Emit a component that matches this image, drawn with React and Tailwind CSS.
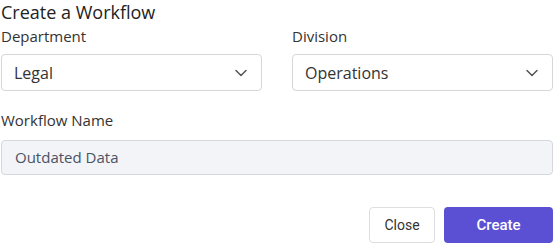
import React from 'react';
import { ChevronDown } from 'lucide-react';

const Select = ({ value }) => (
  <div className="h-[37px] flex items-center justify-between pl-[12px] pr-[10px] border border-[#d6d6d6] rounded-[4px] bg-white">
    <span className="text-[16px] text-[#333]">{value}</span>
    <ChevronDown size={20} strokeWidth={1.8} className="text-[#555]" />
  </div>
);

const App = () => {
  return (
    <div className="w-[560px] h-[248px] bg-white overflow-hidden font-['Open_Sans',sans-serif]">
      <div className="ml-px w-[552px] flex flex-col">
        <h1 className="text-[18px] leading-[24px] text-[#222]">Create a Workflow</h1>

        <div className="grid grid-cols-2 gap-[30px] mt-[2px]">
          <div className="flex flex-col">
            <label className="text-[15px] leading-5 text-[#333]">Department</label>
            <div className="mt-[8px]">
              <Select value="Legal" />
            </div>
          </div>
          <div className="flex flex-col">
            <label className="text-[15px] leading-5 text-[#333]">Division</label>
            <div className="mt-[8px]">
              <Select value="Operations" />
            </div>
          </div>
        </div>

        <label className="mt-[19px] text-[15px] leading-5 text-[#333]">Workflow Name</label>
        <div className="mt-[10px] h-[35px] flex items-center pl-[13px] border border-[#d4d7de] rounded-[4px] bg-[#f3f4f8]">
          <span className="text-[15px] text-[#4a5263]">Outdated Data</span>
        </div>

        <div className="mt-[32px] flex justify-end gap-[9px] font-['Roboto',sans-serif]">
          <button className="w-[66px] h-[36px] border border-[#dedede] rounded-[4px] bg-white text-[14px] text-[#333]">
            Close
          </button>
          <button className="w-[109px] h-[36px] rounded-[4px] bg-[#5b50d3] text-[15px] font-medium text-white">
            Create
          </button>
        </div>
      </div>
    </div>
  );
};

export default App;
